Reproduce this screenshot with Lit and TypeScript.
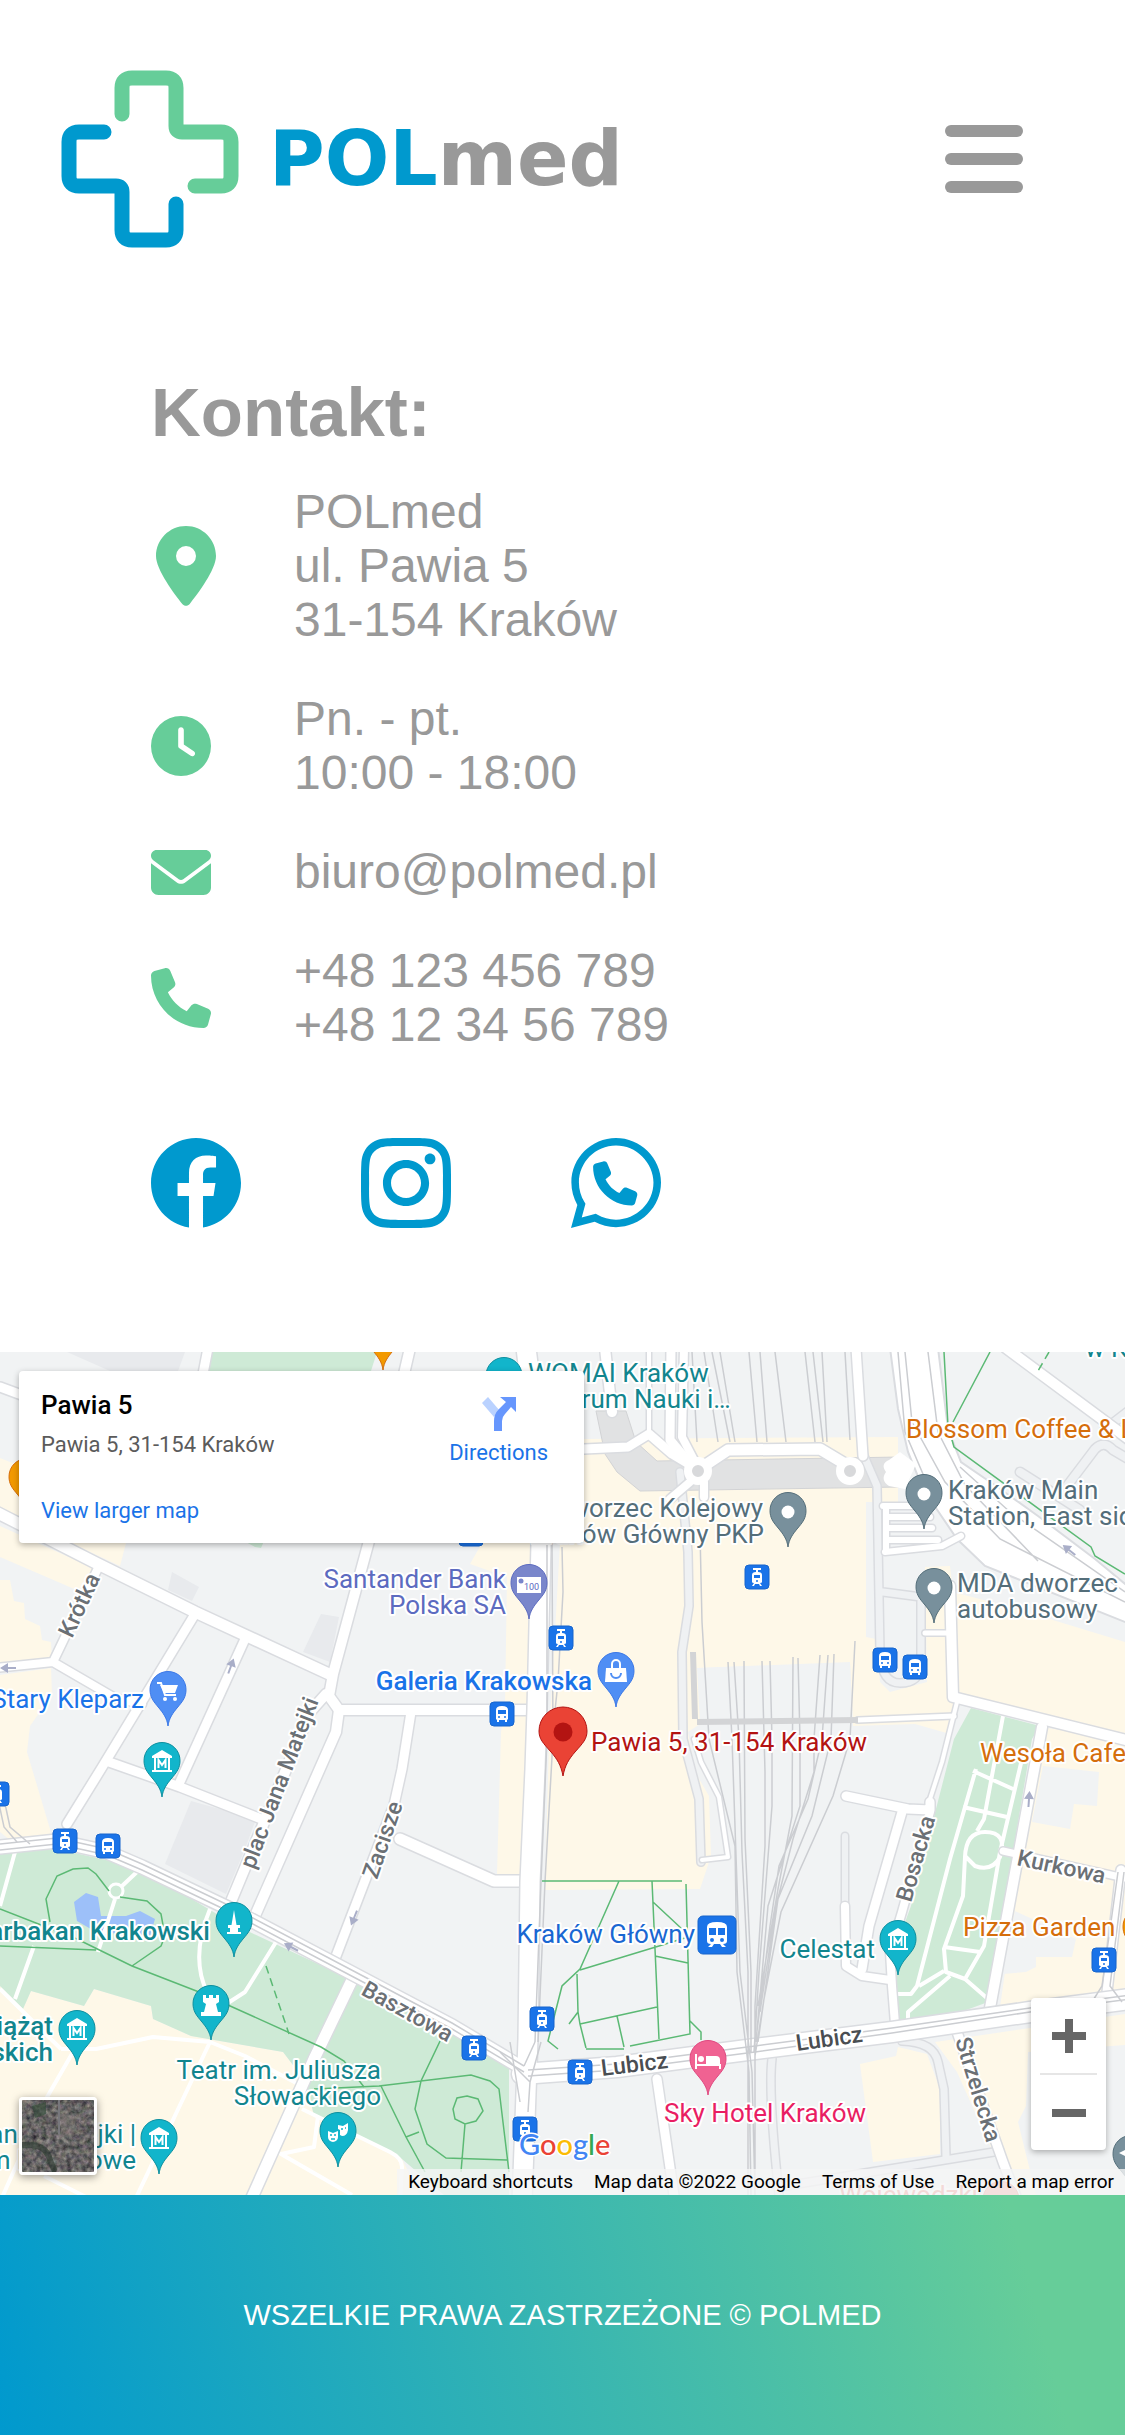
import { LitElement, html, svg, css } from "lit";
import { customElement } from "lit/decorators.js";

type Road = [string, number];
type Label = [number, number, string, string, ("start" | "end")?, number?];

/* Street map geometry, drawn on a 1125 x 843 canvas. */

const CREAM = [
  "0,106 30,118 60,135 60,190 126,191 120,214 0,158",
  "0,174 93,216 79,239 0,205",
  "0,228 10,228 14,249 24,251 25,267 40,274 42,288 51,290 52,310 0,318",
  "0,323 51,316 52,343 30,374 27,400 50,477 51,487 15,492 0,480",
  "482,191 470,212 507,225 505,354 501,380 497,522 519,524 530,500 532,191",
  "549,191 584,87 898,85 898,137 898,150 866,150 866,285 876,287 880,330 890,340 927,330 925,215 950,214 953,240 1010,255 1125,290 1125,387 955,345 950,382 915,372 853,374 850,310 697,316 700,372 688,380 695,420 709,444 711,504 700,537 545,538 549,387 560,191",
  "1040,375 1125,387 1125,645 1000,655",
  "860,712 896,704 898,695 927,702 940,737 940,802 873,810",
  "935,690 1030,676 1125,662 1125,693 1028,700 1026,754 1018,770 1036,843 1012,843 957,720",
  "0,634 23,657 31,639 84,654 94,637 151,654 153,667 191,684 283,700 306,730 314,764 402,807 420,843 0,843",
];
const BLOCKS = [
  "67,0 185,0 178,19 110,19",
  "172,220 199,235 192,249 168,238",
  "321,262 339,265 330,310 303,300",
  "191,449 256,467 245,497 226,542 165,512",
];
const LIGHT = [
  "1043,414 1099,420 1097,454 1074,452 1070,477 1032,470",
  "1015,559 1076,587 1072,605 1036,605 1036,615 1026,620 1003,622",
  "700,316 850,311 853,374 700,376",
];
const GREEN = [
  "213,0 377,0 371,19 207,19",
  "244,189 264,189 261,196 255,195",
  "0,500 57,497 115,510 180,540 237,574 344,624 452,680 509,714 509,843 444,843 402,807 314,764 306,730 283,700 191,684 153,667 151,654 94,637 84,654 31,639 23,657 0,634",
  "971,356 1040,374 1032,387 988,650 942,667 898,670 894,600 911,554 954,387",
];
const ROADS: Road[] = [
  ["M0 35L19 42L60 60", 9],
  ["M208-4L203 22", 9],
  ["M410-4L404 22", 10],
  ["M-4 160L96 211L195 260L329 322", 11],
  ["M369 189L333 322L329 344L339 358H528", 10],
  ["M326 342L310 360L230 552", 10],
  ["M339 358L336 380L254 566", 10],
  ["M99 214L53 310M-4 316L53 310L115 346L142 352", 8],
  ["M195 262L101 417L67 472", 9],
  ["M245 287L179 432", 9],
  ["M109 410L180 435L264 468", 9],
  ["M411 360L402 417L394 453L333 612", 9],
  ["M400 487L494 529H530", 11],
  ["M352 628L314 707L250 850", 11],
  ["M584 97L628 95L649 82L672 102L692 114", 9],
  ["M649-4V80", 4],
  ["M671-4L670 88L690 112", 9],
  ["M684-4L682 85L694 108", 8],
  ["M605-4L612 60", 10],
  ["M690 130L670 147M704 130V145", 8],
  ["M707 112L728 98L820 97L845 112", 11],
  ["M863 104L856-4", 9],
  ["M1006-4L1099 65L1130 88", 10],
  ["M883 154H925M886 154V200M886 165H930M886 176H932M886 188H938M885 200L942 194L961 184", 6],
  ["M950 234L953 345L1130 389", 10],
  ["M925 281H948M858 368L954 364", 5],
  ["M957 350L942 410L930 447", 4],
  ["M846 444L908 457L930 458V450", 9],
  ["M902 460L869 574L862 617", 9],
  ["M845 554L846 614L862 624L890 628", 8],
  ["M930 460L902 560L890 600L892 634L895 672", 8],
  ["M1042 375L990 656", 10],
  ["M1003 499L1125 526", 7],
  ["M1121 518L1107 640", 9],
  ["M657 727L675 850", 9],
  ["M957 680L1003 810L1018 850", 9],
  ["M694 387L701 410L719 445L728 505L702 508", 4],
];
const SERVICE: Road[] = [
  ["M680 120L688 200L689 254L682 300L683 387L699 447L701 510", 7],
  ["M864 104L877 134L880 300Q881 331 900 331Q920 331 921 312V245L883 240", 7],
  ["M845 484V554", 6],
  ["M779 835L1000 799M772 707Q768 740 779 843", 7],
  ["M902 689Q934 690 938 710L944 737L946 805", 7],
  ["M1130 58L1104 78M1067 134L1095 97Q1104 88 1113 98L1130 108M1020 120L1080 158", 8],
];
const MAIN: Road[] = [
  ["M0 495L57 489L107 500L142 515L230 557L344 617L452 674L524 717", 13],
  ["M526-4L534 60L541 191L537 357L535 417L530 530L528 687L522 850", 19],
  ["M522 722L617 715L755 697L892 680L1030 660L1130 647", 20],
];
const PARK = [
  "M15 500L0 554M34 594L15 647M0 637L61 697M73 700L46 747L0 850M61 697H96L153 685L210 690L245 704L302 734M210 690L134 850M302 757L390 800Q402 806 402 815L400 850M318 764L314 795L281 802L352 843M44 824L96 850",
  "M210 557Q190 605 207 640M276 590L245 640L214 660M138 519L122 534M115 547L98 600",
  "M976 417L950 507L917 634L911 642H894M1022 407L1000 500L984 594L965 627L946 620L944 597L963 544L965 505Q966 480 985 480Q1008 480 1000 505Q992 520 975 514L965 504M973 419L1013 437M963 455L1007 465M1003 364L984 467L977 479M944 595L980 600M950 624L908 660V670M965 627L988 647M919 634L944 619M1003 499L1019 500",
];
const WALKS = [
  "M50 570L46 547L57 524L73 517L88 516L96 522L109 539M120 545L147 549L161 562L165 584L161 594L132 614M0 557L77 587L132 614L199 640L321 695L344 709L364 735M0 594L96 598",
  "M442 685L421 729L415 757L427 792L446 806L507 808M314 737L379 734L471 723L490 729L499 737L509 820M381 734L406 785L425 820M406 785L419 780M467 744L478 747L483 759L476 769L465 772L455 767L453 757L457 746ZM465 772L461 820",
  "M542 529H682M619 529L580 617L562 634L548 689L558 697M652 529L659 687M686 532L690 682L630 694M653 550L682 577M580 618L659 594L688 585M577 622L578 660L580 672L586 696M580 672L657 655M617 664L624 695M586 697H624M655 604L688 611M578 660L569 672M690 669L701 680V688",
  "M944 0L948 74L954 95L1091 195L1095 204L1125 222M990 0L953 70",
];
const RAILS = [
  "M692 0L697 90M704 0L718 90M712 0L730 90M720 0L735 90M749 0L757 90M760 0L767 90M775 0L786 90M805 0L815 90M813 0L823 90M822 0L827 90M845 0L850 88",
  "M700 180L702 270L709 387L735 494L737 620L749 720L751 843M728 310L732 387L740 620L752 720L755 843M734 310L739 387L742 500L748 620V843M744 309L745 487L751 620V700M762 309L765 420V494L755 654V843M770 309L772 387V454L759 620L754 700M793 305L792 464L778 537L758 654M798 306L800 387V454L768 554L756 690M820 303L814 387V420L793 487L776 554L760 660M828 303L822 387L808 447L779 514L770 574L756 687M834 302L831 387L812 464L778 547L758 690M855 289L850 387L833 444L781 560L764 647L755 704",
  "M547 191V387L541 530L535 690M552 191L553 387L545 530L538 690M562 195L563 240L558 330L552 387",
  "M0 492L57 486L107 497L142 512L230 554L344 614L452 671L524 714M0 498L57 492L107 503L142 518L230 560L344 620L452 677L524 720M-2 447L4 475L17 490M4 447L10 475L30 492",
  "M528 724L617 718L755 700L892 681L1030 660L1130 647M528 718L617 712L755 694L892 676L1030 656L1130 643M524 714L535 690M530 730L541 690M500 700L530 730L528 760M510 690L520 750",
  "M928 0L938 80L965 133L1038 209M905 0L912 70L945 130L1000 187L1125 250M898 0L905 80L935 150M960 115L1010 160L1125 240M1118 520L1102 634L1092 650M1124 520L1110 634L1122 650",
];

const LABELS: Label[] = [
  [528, 30, "WOMAI Kraków", "teal"],
  [528, 56, "Centrum Nauki i…", "teal"],
  [1085, 5, "w Krakowie", "teal"],
  [906, 86, "Blossom Coffee & L", "orange"],
  [763, 165, "Dworzec Kolejowy", "slate", "end"],
  [764, 191, "Kraków Główny PKP", "slate", "end"],
  [948, 147, "Kraków Main", "slate"],
  [948, 173, "Station, East side", "slate"],
  [957, 240, "MDA dworzec", "slate"],
  [957, 266, "autobusowy", "slate"],
  [506, 236, "Santander Bank", "indigo", "end"],
  [506, 262, "Polska SA", "indigo", "end"],
  [144, 356, "Stary Kleparz", "blue", "end"],
  [592, 338, "Galeria Krakowska", "blue strong", "end"],
  [591, 399, "Pawia 5, 31-154 Kraków", "red"],
  [980, 410, "Wesoła Cafe", "orange"],
  [963, 584, "Pizza Garden", "orange"],
  [875, 606, "Celestat", "teal", "end"],
  [695, 591, "Kraków Główny", "navy", "end"],
  [664, 770, "Sky Hotel Kraków", "pink"],
  [210, 588, "Barbakan Krakowski", "teal strong", "end"],
  [53, 683, "Muzeum Książąt", "teal strong", "end"],
  [53, 709, "Czartoryskich", "teal strong", "end"],
  [381, 727, "Teatr im. Juliusza", "teal", "end"],
  [381, 753, "Słowackiego", "teal", "end"],
  [136, 791, "Dom Jana Matejki |", "teal", "end"],
  [136, 817, "Muzeum Narodowe", "teal", "end"],
  [839, 852, "Wojewódzki", "faded"],
  [602, 724, "Lubicz", "street dark", "start", -7],
  [797, 699, "Lubicz", "street dark", "start", -8],
  [911, 551, "Bosacka", "street", "start", -74],
  [955, 688, "Strzelecka", "street", "start", 73],
  [360, 642, "Basztowa", "street", "start", 29],
  [377, 528, "Zacisze", "street", "start", -71],
  [254, 518, "plac Jana Matejki", "street", "start", -69],
  [72, 287, "Krótka", "street", "start", -65],
  [1016, 513, "Kurkowa", "street", "start", 12],
];

const GLYPHS = {
  none: svg``,
  dot: svg`<circle r="6.5" fill="#fff" />`,
  museum: svg`<path fill="#fff" fill-rule="evenodd" d="M0-12L10-6V-4H8V8H10V10H-10V8H-8V-4H-10V-6ZM-6-4V8H6V-4Z" /><path fill="none" stroke="#fff" stroke-width="2" d="M-3.500 6V-2L0 3L3.500-2V6" />`,
  cart: svg`<path fill="none" stroke="#fff" stroke-width="2" d="M-11-8H-7L-3 4H8" /><path fill="#fff" d="M-8-6H10L7 2H-4Z" /><circle cx="-3" cy="8" r="2" fill="#fff" /><circle cx="7" cy="8" r="2" fill="#fff" />`,
  bag: svg`<path fill="#fff" d="M-10-4H10L11 10H-11Z" /><path fill="none" stroke="#fff" stroke-width="2" d="M-4-4V-8A4 4 0 0 1 4-8V-4" /><path fill="none" stroke="#4f8ef4" stroke-width="2" d="M-5 1A5 5 0 0 0 5 1" />`,
  money: svg`<path fill="#fff" d="M-12-7H12V9H-12Z" /><circle cx="-8" cy="-3" r="2.500" fill="#7986cb" /><text class="tiny" x="-5" y="6">100</text>`,
  obelisk: svg`<path fill="#fff" d="M0-12L2.500 3H6V6H4V10H7V12H-7V10H-4V6H-6V3H-2.500Z" />`,
  rook: svg`<path fill="#fff" d="M-8-10H-5V-7H-2V-10H2V-7H5V-10H8V-3L5-1L7 7H10V11H-10V7H-7L-5-1L-8-3Z" />`,
  masks: svg`<path fill="#fff" d="M-10-1L-5 1L0-1V5A5 5 0 0 1-10 5ZM0-7L5-6L10-9V-2Q9 4 4 4L2 3V-2L0-3Z" /><path stroke="#12b5cb" stroke-width="1.500" fill="none" d="M-8 3H-6M-4 3H-2M3-3H5M7-4H8M-7 7H-3" />`,
  bed: svg`<path fill="none" stroke="#fff" stroke-width="2" d="M-12-6V9M-12 5H12V9" /><path fill="#fff" d="M-2-4H8Q12-4 12 0V4H-2Z" /><circle cx="-7" cy="-1" r="3" fill="#fff" />`,
  school: svg`<path fill="#fff" d="M-12-2L0-8V4Z" />`,
};
type Glyph = keyof typeof GLYPHS;

const PINS: [number, number, string, string, Glyph][] = [
  [168, 374, "#4f8ef4", "#3b78e7", "cart"],
  [529, 267, "#7986cb", "#5c6bc0", "money"],
  [162, 445, "#12b5cb", "#0d8f9f", "museum"],
  [234, 605, "#12b5cb", "#0d8f9f", "obelisk"],
  [211, 688, "#12b5cb", "#0d8f9f", "rook"],
  [77, 713, "#12b5cb", "#0d8f9f", "museum"],
  [159, 822, "#12b5cb", "#0d8f9f", "museum"],
  [338, 815, "#12b5cb", "#0d8f9f", "masks"],
  [504, 60, "#12b5cb", "#0d8f9f", "bed"],
  [616, 355, "#4f8ef4", "#3b78e7", "bag"],
  [788, 195, "#78909c", "#546e7a", "dot"],
  [924, 177, "#78909c", "#546e7a", "dot"],
  [934, 271, "#78909c", "#546e7a", "dot"],
  [898, 623, "#12b5cb", "#0d8f9f", "museum"],
  [708, 743, "#f06292", "#e04880", "bed"],
  [383, 18, "#f29900", "#d56e0c", "none"],
  [27, 161, "#f29900", "#d56e0c", "none"],
  [1131, 838, "#78909c", "#546e7a", "school"],
  [1141, 611, "#f29900", "#d56e0c", "none"],
  [1001, 884, "#f28b82", "#ea6a60", "none"],
];
const TRAMS: [number, number][] = [
  [561, 286], [757, 225], [65, 489], [-3, 442], [542, 667], [474, 696],
  [580, 720], [525, 777], [1104, 608], [471, 182],
];
const BUSES: [number, number][] = [[502, 362], [885, 308], [915, 315], [108, 494]];
const ARROWS: [number, number, number][] = [
  [8, 316, 180], [231, 314, -70], [354, 566, 112], [291, 595, 208], [1029, 447, -86], [1069, 198, 218],
];

@customElement("street-map")
export class StreetMap extends LitElement {
  static styles = css`
    :host { display: block; }
    .canvas { display: block; width: 100%; height: auto; background: #f1f3f4; }
    text { font-family: Roboto, "Noto Sans", sans-serif; font-size: 26px; stroke: #fff; stroke-width: 4px; stroke-linejoin: round; paint-order: stroke; }
    .strong { font-weight: 500; }
    .teal { fill: #12858e; }
    .blue { fill: #1a73e8; }
    .navy { fill: #1967d2; }
    .indigo { fill: #5c6bc0; }
    .orange { fill: #d56e0c; }
    .slate { fill: #546e7a; }
    .pink { fill: #e91e63; }
    .red { fill: #b31412; }
    .faded { fill: #ea6a60; }
    .street { fill: #6b7075; font-size: 23px; font-weight: 500; }
    .dark { fill: #4a4e52; }
    .tiny { font-size: 9px; fill: #5c6bc0; stroke: none; }
    .casing { stroke: #dadce0; fill: none; stroke-linejoin: round; stroke-linecap: round; }
    .surface { stroke: #fff; fill: none; stroke-linejoin: round; stroke-linecap: round; }
    .service { stroke: #eff1f3; fill: none; stroke-linejoin: round; stroke-linecap: round; }
    .rail { stroke: #cbcdd1; stroke-width: 1.5px; fill: none; }
    .walk { stroke: #5bb974; stroke-width: 1.5px; fill: none; }
    .dashed { stroke-dasharray: 8 5; }
    .park { stroke: #fff; stroke-width: 4px; fill: none; stroke-linejoin: round; }
  `;

  private areas(list: string[], fill: string) {
    return list.map((p) => svg`<polygon points=${p} fill=${fill} />`);
  }
  private roads(list: Road[], surface: string) {
    return svg`${list.map(([d, w]) => svg`<path class="casing" d=${d} stroke-width=${w + 3} />`)}
      ${list.map(([d, w]) => svg`<path class=${surface} d=${d} stroke-width=${w} />`)}`;
  }
  private pin([x, y, fill, edge, glyph]: [number, number, string, string, Glyph]) {
    return svg`<g transform="translate(${x} ${y})">
      <path fill=${fill} stroke=${edge} d="M0 0C-1-8-5-13-9-18C-15-25-18-29-18-36.500A18 18 0 0 1 18-36.500C18-29 15-25 9-18C5-13 1-8 0 0Z" />
      <g transform="translate(0 -35)">${GLYPHS[glyph]}</g></g>`;
  }
  private badge(x: number, y: number, tram: boolean) {
    return svg`<g transform="translate(${x} ${y})">
      <rect x="-12" y="-12" width="24" height="24" rx="4" fill="#1a73e8" stroke="#1765cc" />
      ${tram
        ? svg`<path fill="#fff" fill-rule="evenodd" d="M-4-9H4V-7H1V-5Q5-5 5-2V5Q5 6 3 6L5 9H3L2 7H-2L-3 9H-5L-3 6Q-5 6-5 5V-2Q-5-5-1-5V-7H-4ZM-3-2V1H3V-2ZM0 3A1 1 0 0 0 0 5A1 1 0 0 0 0 3Z" />`
        : svg`<path fill="#fff" fill-rule="evenodd" d="M-6-4Q-6-8 0-8Q6-8 6-4V5L5 6V8H3V6H-3V8H-5V6L-6 5ZM-4-4V0H4V-4ZM-3 2A1 1 0 0 0-3 4A1 1 0 0 0-3 2ZM3 2A1 1 0 0 0 3 4A1 1 0 0 0 3 2Z" />`}</g>`;
  }

  render() {
    return html`<svg class="canvas" viewBox="0 0 1125 843" role="img" aria-label="Pawia 5, 31-154 Kraków">
      ${this.areas(BLOCKS, "#e8eaed")}
      ${this.areas(CREAM, "#fef8e8")}
      ${this.areas(LIGHT, "#f1f3f4")}
      ${this.areas(GREEN, "#ceead6")}
      <path fill="#9dc0f9" d="M86 541L98 545L101 564L126 564L140 559L155 567L150 584L96 580L77 569L74 550Z" />
      <path fill="#e1e2e3" stroke="#d2d3d5" d="M596 59L626 59L636 90L657 109L900 105V135L640 139L617 120L605 102Z" />
      ${PARK.map((d) => svg`<path class="park" d=${d} />`)}
      <circle cx="116" cy="539" r="7" fill="#ceead6" stroke="#fff" stroke-width="3" />
      ${this.roads(SERVICE, "service")}
      <path fill="#fff" stroke="#dadce0" stroke-width="2" d="M890-4L898 57L908 100L923 137L957 187L985 214L1130 272V236L1095 207L1038 164L996 134L961 110L948 77L938-4Z" />
      <path fill="#fff" d="M889 108Q880 112 886 120Q880 128 889 134L905 137L916 112L900 100Z" />
      ${this.roads(ROADS, "surface")}
      <circle cx="698" cy="119" r="10" fill="#d8d9db" stroke="#fff" stroke-width="8" />
      <circle cx="850" cy="119" r="10" fill="#d8d9db" stroke="#fff" stroke-width="8" />
      ${this.roads(MAIN, "surface")}
      ${RAILS.map((d) => svg`<path class="rail" d=${d} />`)}
      <path fill="none" stroke="#d3d4d6" stroke-width="6" d="M693 300L695 367M697 370L858 368" />
      ${WALKS.map((d) => svg`<path class="walk" d=${d} />`)}
      <path class="walk dashed" d="M266 614L289 682M1049 0L1038 19" />
      ${ARROWS.map(([x, y, a]) => svg`<path transform="translate(${x} ${y}) rotate(${a})" fill="#a9aec8" d="M-8-1H0V-5L8 0L0 5V1H-8Z" />`)}
      ${LABELS.map(([x, y, t, cls, anchor, rot]) => svg`<text class=${cls} text-anchor=${anchor ?? "start"} transform="translate(${x} ${y}) rotate(${rot ?? 0})">${t}</text>`)}
      ${TRAMS.map(([x, y]) => this.badge(x, y, true))}
      ${BUSES.map(([x, y]) => this.badge(x, y, false))}
      <g transform="translate(717 583)">
        <rect x="-19" y="-19" width="38" height="38" rx="5" fill="#1a73e8" stroke="#1765cc" />
        <path fill="#fff" fill-rule="evenodd" d="M-10-8Q-10-13 0-13Q10-13 10-8V6Q10 9 6 9L9 12H5L3 9H-3L-5 12H-9L-6 9Q-10 9-10 6ZM-8-7V0H-1V-7ZM1-7V0H8V-7ZM-5 3A2 2 0 0 0-5 7A2 2 0 0 0-5 3ZM5 3A2 2 0 0 0 5 7A2 2 0 0 0 5 3Z" />
      </g>
      ${PINS.map((p) => this.pin(p))}
      <g transform="translate(563 424)">
        <path fill="#ea4335" stroke="#b31412" d="M0 0C-2-11-6-17-12-24C-20-33-24-37-24-45A24 24 0 0 1 24-45C24-37 20-33 12-24C6-17 2-11 0 0Z" />
        <circle cy="-44" r="9.500" fill="#b31412" />
      </g>
    </svg>`;
  }
}

const ICONS = {
  pin: svg`<path d="M215.7 499.2C267 435 384 279.4 384 192C384 86 298 0 192 0S0 86 0 192c0 87.4 117 243 168.3 307.2c12.3 15.3 35.1 15.3 47.4 0zM192 128a64 64 0 1 1 0 128 64 64 0 1 1 0-128z"/>`,
  clock: svg`<path d="M256 0a256 256 0 1 1 0 512A256 256 0 1 1 256 0zM232 120V256c0 8 4 15.5 10.7 20l96 64c11 7.4 25.9 4.4 33.3-6.7s4.4-25.9-6.7-33.3L280 243.2V120c0-13.3-10.7-24-24-24s-24 10.7-24 24z"/>`,
  mail: svg`<path d="M48 64C21.5 64 0 85.5 0 112c0 15.1 7.1 29.3 19.2 38.4L236.8 313.6c11.4 8.5 27 8.5 38.4 0L492.8 150.4c12.1-9.1 19.2-23.3 19.2-38.4c0-26.5-21.5-48-48-48H48zM0 176V384c0 35.3 28.7 64 64 64H448c35.3 0 64-28.7 64-64V176L294.4 339.2c-22.8 17.1-54 17.1-76.8 0L0 176z"/>`,
  phone: svg`<path d="M164.9 24.6c-7.7-18.6-28-28.5-47.4-23.2l-88 24C12.1 30.2 0 46 0 64C0 311.4 200.6 512 448 512c18 0 33.8-12.1 38.6-29.5l24-88c5.3-19.4-4.6-39.7-23.2-47.4l-96-40c-16.3-6.8-35.2-2.1-46.3 11.6L304.7 368C234.3 334.7 177.3 277.7 144 207.3L193.3 167c13.7-11.2 18.4-30 11.6-46.3l-40-96z"/>`,
};
const ICON_BOXES = {
  pin: "0 0 384 512",
  clock: "0 0 512 512",
  mail: "0 64 512 384",
  phone: "0 0 512 512",
};

@customElement("app-root")
export class AppRoot extends LitElement {
  static styles = css`
    :host { display: block; background: #fff; color: #999; font-family: "Liberation Sans", Helvetica, Arial, sans-serif; }
    a { color: inherit; text-decoration: none; }
    button { border: 0; padding: 0; background: none; cursor: pointer; }
    .bar { display: flex; align-items: center; justify-content: space-between; height: 318px; padding: 0 102px 0 61px; box-sizing: border-box; }
    .brand { display: flex; align-items: center; gap: 30px; font-family: "DejaVu Sans", Verdana, sans-serif; font-size: 76px; font-weight: 700; line-height: 84px; }
    .brand-mark { width: 178px; height: 178px; }
    .brand-pol { color: #0099ce; }
    .menu { display: grid; gap: 16px; width: 78px; }
    .menu-line { height: 12px; border-radius: 6px; background: #999; }
    .contact { padding: 55px 151px 124px; }
    .title { margin: 0; font-size: 69px; line-height: 80px; font-weight: 700; }
    .rows { display: grid; gap: 45px; margin: 32px 0 0; padding: 0; list-style: none; font-size: 48px; line-height: 54px; }
    .row { display: grid; grid-template-columns: 143px 1fr; align-items: center; }
    .icon { fill: #66cd99; }
    .icon-pin { width: 70px; height: 80px; }
    .icon-clock, .icon-phone { width: 60px; height: 60px; }
    .icon-mail { width: 60px; height: 45px; }
    .lines { display: grid; justify-items: start; font-style: normal; }
    .social { display: flex; gap: 120px; margin-top: 86px; }
    .social-link { display: block; height: 90px; }
    .social-icon { display: block; width: 90px; height: 90px; fill: #0099ce; }
    .map { position: relative; overflow: hidden; font-family: Roboto, "Noto Sans", sans-serif; }
    .place { position: absolute; top: 19px; left: 19px; display: flex; justify-content: space-between; width: 565px; height: 172px; padding: 18px 36px 12px 22px; box-sizing: border-box; border-radius: 4px; background: #fff; box-shadow: 0 2px 6px rgba(0, 0, 0, 0.3); color: #5b5b5b; font-size: 22px; }
    .place-text { display: flex; flex-direction: column; align-items: flex-start; line-height: 32px; }
    .place-name { margin: 0 0 8px; font-size: 26px; font-weight: 500; line-height: 32px; color: #000; }
    .link { color: #1a73e8; }
    .larger { margin-top: 34px; }
    .directions { display: flex; flex-direction: column; align-items: center; gap: 9px; padding-top: 8px; line-height: 26px; }
    .directions-icon { width: 34px; height: 34px; }
    .satellite { position: absolute; left: 19px; bottom: 20px; width: 78px; height: 78px; box-sizing: border-box; border: 3px solid #fff; border-radius: 4px; overflow: hidden; box-shadow: 0 2px 8px rgba(0, 0, 0, 0.4); }
    .satellite-view { display: block; width: 100%; height: 100%; }
    .zoom { position: absolute; right: 19px; bottom: 45px; display: flex; flex-direction: column; width: 75px; height: 152px; padding: 0 9px; box-sizing: border-box; border-radius: 4px; background: #fff; box-shadow: 0 2px 6px rgba(0, 0, 0, 0.3); }
    .zoom-button { display: grid; place-items: center; flex: 1; }
    .zoom-button + .zoom-button { border-top: 2px solid #e6e6e6; }
    .zoom-icon { width: 34px; height: 34px; fill: #666; }
    .google { position: absolute; left: 519px; bottom: 33px; font-family: Lato, sans-serif; font-size: 29px; line-height: 36px; font-weight: 500; -webkit-text-stroke: 3px #fff; paint-order: stroke; }
    .g-blue { color: #4285f4; }
    .g-red { color: #ea4335; }
    .g-yellow { color: #fbbc04; }
    .g-green { color: #34a853; }
    .legal { position: absolute; right: 0; bottom: 0; display: flex; gap: 21px; padding: 0 11px; background: rgba(245, 245, 245, 0.8); color: #000; font-size: 19px; line-height: 26px; }
    .legal-button { font: inherit; color: inherit; }
    .copyright { display: grid; place-items: center; height: 240px; background: linear-gradient(75deg, #0099ce 0%, #66cd99 90%); color: #fff; font-size: 29px; line-height: 36px; text-transform: uppercase; text-align: center; }
    .copyright-text { margin: 0; }
  `;

  private row(icon: keyof typeof ICONS, body: unknown) {
    return html`<li class="row">
      <svg class="icon icon-${icon}" viewBox=${ICON_BOXES[icon]} aria-hidden="true">${ICONS[icon]}</svg>
      ${body}
    </li>`;
  }

  render() {
    return html`
      <header class="bar">
        <a class="brand" href="#">
          <svg class="brand-mark" viewBox="61 69 178 178" fill="none" stroke-width="15" stroke-linecap="round" aria-hidden="true">
            <path stroke="#66cd99" d="M122 113V87Q122 77 132 77H166Q176 77 176 87V125Q176 131 182 131H221Q231 131 231 141V175Q231 185 221 185H195" />
            <path stroke="#0099ce" d="M104 131H79Q69 131 69 141V175Q69 185 79 185H116Q122 185 122 191V229Q122 239 132 239H166Q176 239 176 229V203" />
          </svg>
          <span><span class="brand-pol">POL</span>med</span>
        </a>
        <button class="menu" aria-label="Menu"><span class="menu-line"></span><span class="menu-line"></span><span class="menu-line"></span></button>
      </header>
      <main>
        <section class="contact">
          <h1 class="title">Kontakt:</h1>
          <ul class="rows">
            ${this.row("pin", html`<address class="lines"><span>POLmed</span><span>ul. Pawia 5</span><span>31-154 Kraków</span></address>`)}
            ${this.row("clock", html`<div class="lines"><span>Pn. - pt.</span><span>10:00 - 18:00</span></div>`)}
            ${this.row("mail", html`<div class="lines"><a href="mailto:biuro@polmed.pl">biuro@polmed.pl</a></div>`)}
            ${this.row("phone", html`<div class="lines"><a href="tel:+48123456789">+48 123 456 789</a><a href="tel:+48123456789">+48 12 34 56 789</a></div>`)}
          </ul>
          <nav class="social" aria-label="Social media">
            <a class="social-link" href="#" aria-label="Facebook"><svg class="social-icon" viewBox="8 8 496 496"><path d="M504 256C504 119 393 8 256 8S8 119 8 256c0 123.78 90.69 226.38 209.25 245V327.69h-63V256h63v-54.64c0-62.15 37-96.48 93.67-96.48 27.14 0 55.52 4.84 55.52 4.84v61h-31.28c-30.8 0-40.41 19.12-40.41 38.73V256h68.78l-11 71.69h-57.78V501C413.31 482.38 504 379.78 504 256z"/></svg></a>
            <a class="social-link" href="#" aria-label="Instagram"><svg class="social-icon" viewBox="0 32 448 448"><path d="M224.1 141c-63.6 0-114.9 51.3-114.9 114.9s51.3 114.9 114.9 114.9S339 319.5 339 255.9 287.7 141 224.1 141zm0 189.6c-41.1 0-74.7-33.5-74.7-74.7s33.5-74.7 74.7-74.7 74.7 33.5 74.7 74.7-33.6 74.7-74.7 74.7zm146.4-194.3c0 14.9-12 26.8-26.8 26.8-14.9 0-26.8-12-26.8-26.8s12-26.8 26.8-26.8 26.8 12 26.8 26.8zm76.1 27.2c-1.7-35.9-9.9-67.7-36.2-93.9-26.2-26.2-58-34.4-93.9-36.2-37-2.1-147.9-2.1-184.9 0-35.8 1.7-67.6 9.9-93.9 36.1s-34.4 58-36.2 93.9c-2.1 37-2.1 147.9 0 184.9 1.7 35.9 9.9 67.7 36.2 93.9s58 34.4 93.9 36.2c37 2.1 147.9 2.1 184.9 0 35.9-1.7 67.7-9.9 93.9-36.2 26.2-26.2 34.4-58 36.2-93.9 2.1-37 2.1-147.8 0-184.8zM398.8 388c-7.8 19.6-22.9 34.7-42.6 42.6-29.5 11.7-99.5 9-132.1 9s-102.7 2.6-132.1-9c-19.6-7.8-34.7-22.9-42.6-42.6-11.7-29.5-9-99.5-9-132.1s-2.6-102.7 9-132.1c7.8-19.6 22.9-34.7 42.6-42.6 29.5-11.7 99.5-9 132.1-9s102.7-2.6 132.1 9c19.6 7.8 34.7 22.9 42.6 42.6 11.7 29.5 9 99.5 9 132.1s2.7 102.7-9 132.1z"/></svg></a>
            <a class="social-link" href="#" aria-label="WhatsApp"><svg class="social-icon" viewBox="0 32 448 448"><path d="M380.9 97.1C339 55.1 283.2 32 223.9 32c-122.4 0-222 99.6-222 222 0 39.1 10.2 77.3 29.6 111L0 480l117.7-30.9c32.4 17.7 68.9 27 106.1 27h.1c122.3 0 224.1-99.6 224.1-222 0-59.3-25.2-115-67.1-157zm-157 341.6c-33.2 0-65.7-8.9-94-25.7l-6.7-4-69.8 18.3L72 359.2l-4.4-7c-18.5-29.4-28.2-63.3-28.2-98.2 0-101.7 82.8-184.5 184.6-184.5 49.3 0 95.6 19.2 130.4 54.1 34.8 34.9 56.2 81.2 56.1 130.5 0 101.8-84.9 184.6-186.6 184.6z"/><g transform="translate(110 148) scale(0.43)">${ICONS.phone}</g></svg></a>
          </nav>
        </section>
        <section class="map" aria-label="Mapa">
          <street-map></street-map>
          <div class="place">
            <div class="place-text">
              <h2 class="place-name">Pawia 5</h2>
              <span>Pawia 5, 31-154 Kraków</span>
              <a class="link larger" href="#">View larger map</a>
            </div>
            <a class="link directions" href="#">
              <svg class="directions-icon" viewBox="0 0 34 34" aria-hidden="true"><path fill="#bad2ff" d="M0 6L6 0L18 14L12 20Z" /><path fill="#6696fd" d="M18 0H34V15L29 10L23 17Q20 20 20 24V34H12V24Q12 17 17 12L24 5Z" /></svg>
              Directions
            </a>
          </div>
          <button class="satellite" aria-label="Show satellite imagery">
            <svg class="satellite-view" viewBox="0 0 72 72" aria-hidden="true">
              <filter id="ground" x="0" y="0" width="100%" height="100%" color-interpolation-filters="sRGB">
                <feTurbulence type="fractalNoise" baseFrequency="0.2" numOctaves="3" seed="8" />
                <feColorMatrix values="0.5 0.2 0 0 0.05  0.4 0.3 0 0 0.04  0.4 0.2 0.1 0 0.04  0 0 0 0 1" />
              </filter>
              <rect width="72" height="72" filter="url(#ground)" />
              <path fill="none" stroke="#2c3b30" stroke-opacity="0.6" stroke-width="6" d="M0 45Q22 43 27 57T34 72" />
              <path fill="#2f4a36" fill-opacity="0.6" d="M10 6L24 2V14L13 18Z" />
              <path fill="#8b857d" fill-opacity="0.35" d="M36 14L54 16L52 36L40 38Z" />
              <path stroke="#77777c" stroke-width="2" d="M37 0V34" />
            </svg>
          </button>
          <div class="google"><span class="g-blue">G</span><span class="g-red">o</span><span class="g-yellow">o</span><span class="g-blue">g</span><span class="g-green">l</span><span class="g-red">e</span></div>
          <div class="zoom">
            <button class="zoom-button" aria-label="Zoom in"><svg class="zoom-icon" viewBox="0 0 34 34"><path d="M13 0H21V13H34V21H21V34H13V21H0V13H13Z" /></svg></button>
            <button class="zoom-button" aria-label="Zoom out"><svg class="zoom-icon" viewBox="0 0 34 34"><path d="M0 13H34V21H0Z" /></svg></button>
          </div>
          <div class="legal"><button class="legal-button">Keyboard shortcuts</button><span>Map data ©2022 Google</span><a href="#">Terms of Use</a><a href="#">Report a map error</a></div>
        </section>
      </main>
      <footer class="copyright"><p class="copyright-text">Wszelkie prawa zastrzeżone © POLmed</p></footer>
    `;
  }
}
